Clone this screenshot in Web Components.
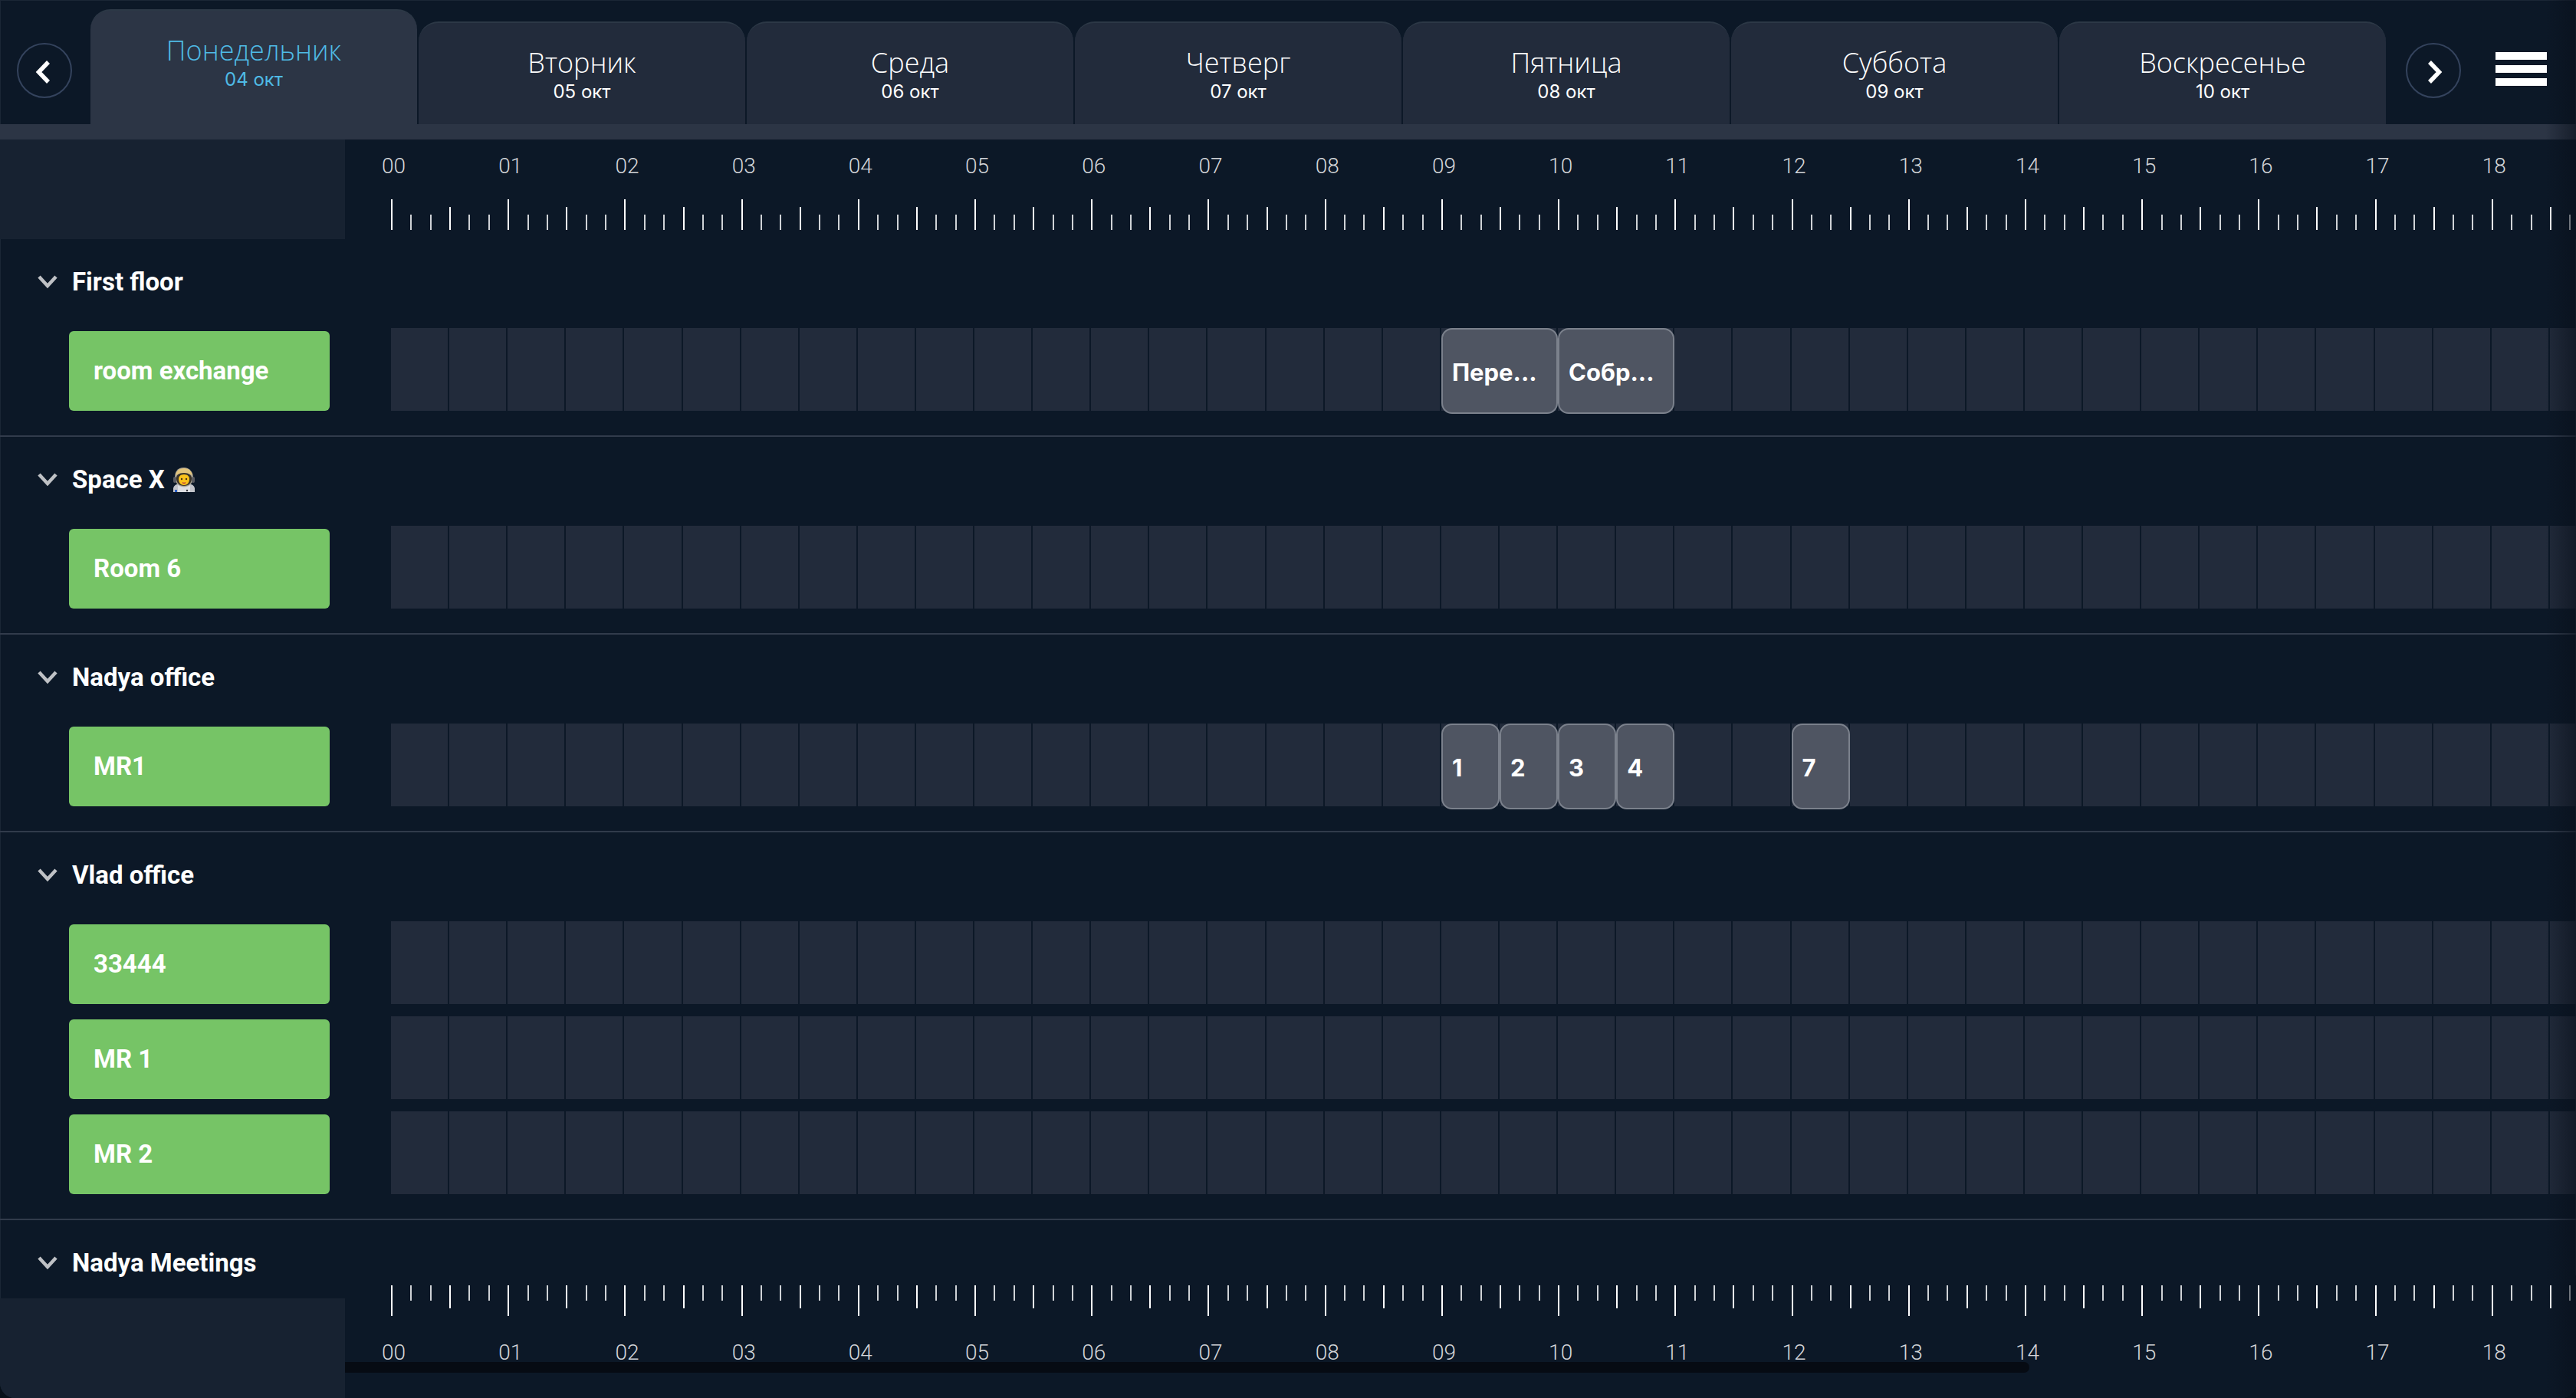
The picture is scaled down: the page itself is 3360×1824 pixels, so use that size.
<!DOCTYPE html>
<html lang="ru">
<head>
<meta charset="UTF-8">
<meta name="viewport" content="width=device-width, initial-scale=1">
<title>Meeting rooms</title>
<style>
    :root {
        --bg: #0c1827;
        --panel: #172231;
        --cell: #222b3b;
        --bar: #2c3545;
        --line: #313b4b;
        --green: #76c466;
        --accent: #4fbbe6;
        --text: #ffffff;
        --muted: #d3d5d9;
        --side-width: 450px;
        --track-offset: 60px;
        --track-width: 2892px;
    }

    body {
        margin: 0;
        background: #071019;
        color: var(--text);
        font-family: Roboto, "Noto Sans", sans-serif;
    }
</style>
</head>
<body>
<schedule-app></schedule-app>

<script>
// Hours drawn on the scale and on every track
const HOURS = Array.from({ length: 19 }, (_, i) => String(i).padStart(2, '0'));

// Round arrow button, direction="prev" or "next"
class NavButton extends HTMLElement {
    constructor() {
        super();
        this.attachShadow({ mode: 'open' });
    }

    connectedCallback() {
        const next = this.getAttribute('direction') === 'next';
        this.shadowRoot.innerHTML = `
            <style>
                :host {
                    display: block;
                }

                button {
                    display: flex;
                    align-items: center;
                    justify-content: center;
                    box-sizing: border-box;
                    width: 72px;
                    height: 72px;
                    padding: 0;
                    border: 2px solid #34435d;
                    border-radius: 50%;
                    background: none;
                    color: inherit;
                    cursor: pointer;
                }
            </style>
            <button type="button" aria-label="${next ? 'Next week' : 'Previous week'}">
                <svg width="40" height="40" viewBox="0 0 40 40" fill="none" stroke="currentColor" stroke-width="5.5">
                    <path d="${next ? 'M15 9 L27.5 22 L15 35' : 'M25 9 L12.5 22 L25 35'}"></path>
                </svg>
            </button>
        `;
    }
}

// One day of the week
class DayTab extends HTMLElement {
    constructor() {
        super();
        this.attachShadow({ mode: 'open' });
    }

    connectedCallback() {
        this.shadowRoot.innerHTML = `
            <style>
                :host {
                    display: flex;
                    flex: 1;
                    min-width: 0;
                    margin-top: 16px;
                }

                :host([active]) {
                    margin-top: 0;
                    color: var(--accent);
                }

                button {
                    flex: 1;
                    display: flex;
                    flex-direction: column;
                    align-items: center;
                    padding: 30px 0 0;
                    border: 0;
                    border-top: 2px solid #2c3846;
                    border-radius: 26px 26px 0 0;
                    background: var(--cell);
                    color: inherit;
                    cursor: pointer;
                }

                :host([active]) button {
                    background: var(--bar);
                }

                .name {
                    font-family: "Open Sans", sans-serif;
                    font-size: 36px;
                    line-height: 44px;
                    font-weight: 300;
                }

                .date {
                    font-family: Inter, sans-serif;
                    font-size: 24px;
                    line-height: 32px;
                    font-weight: 400;
                }
            </style>
            <button type="button" role="tab" aria-selected="${this.hasAttribute('active')}">
                <span class="name"><slot></slot></span>
                <span class="date">${this.getAttribute('date')}</span>
            </button>
        `;
    }
}

class WeekHeader extends HTMLElement {
    constructor() {
        super();
        this.attachShadow({ mode: 'open' });
        this.days = [
            { name: 'Понедельник', date: '04 окт', active: true },
            { name: 'Вторник', date: '05 окт' },
            { name: 'Среда', date: '06 окт' },
            { name: 'Четверг', date: '07 окт' },
            { name: 'Пятница', date: '08 окт' },
            { name: 'Суббота', date: '09 окт' },
            { name: 'Воскресенье', date: '10 окт' }
        ];
        this.render();
    }

    render() {
        this.shadowRoot.innerHTML = `
            <style>
                :host {
                    display: flex;
                    box-sizing: border-box;
                    height: 182px;
                    padding: 12px 38px 0 22px;
                    border-bottom: 20px solid var(--bar);
                }

                nav-button {
                    align-self: flex-start;
                    margin-top: 44px;
                }

                .tabs {
                    flex: 1;
                    display: flex;
                    gap: 2px;
                    margin: 0 26px 0 24px;
                }

                .menu {
                    align-self: flex-start;
                    display: flex;
                    flex-direction: column;
                    gap: 7px;
                    margin: 56px 0 0 45px;
                    padding: 0;
                    border: 0;
                    background: none;
                    cursor: pointer;
                }

                .menu span {
                    width: 67px;
                    height: 10px;
                    background: #ffffff;
                }
            </style>
            <nav-button direction="prev"></nav-button>
            <div class="tabs" role="tablist">
                ${this.days.map(day => `
                    <day-tab date="${day.date}" ${day.active ? 'active' : ''}>${day.name}</day-tab>
                `).join('')}
            </div>
            <nav-button direction="next"></nav-button>
            <button class="menu" type="button" aria-label="Menu">
                <span></span><span></span><span></span>
            </button>
        `;
    }
}

// Hour scale. position="bottom" puts the ticks above the labels
class TimeRuler extends HTMLElement {
    constructor() {
        super();
        this.attachShadow({ mode: 'open' });
    }

    connectedCallback() {
        this.shadowRoot.innerHTML = `
            <style>
                :host {
                    display: flex;
                    flex: none;
                }

                .corner {
                    flex: none;
                    width: var(--side-width);
                    height: 130px;
                    background: var(--panel);
                }

                .scale {
                    position: relative;
                    flex: 1;
                    min-width: 0;
                    box-sizing: border-box;
                    height: 130px;
                    padding-left: var(--track-offset);
                    background: var(--bg);
                    overflow: hidden;
                }

                .hours {
                    display: grid;
                    grid-template-columns: repeat(${HOURS.length}, 1fr);
                    width: var(--track-width);
                    padding-top: 15px;
                }

                .hour {
                    display: flex;
                    flex-direction: column;
                    gap: 23px;
                }

                .label {
                    margin-left: -12px;
                    color: var(--muted);
                    font-size: 28px;
                    line-height: 40px;
                    font-weight: 300;
                }

                .ticks {
                    display: grid;
                    grid-template-columns: repeat(6, 1fr);
                    align-items: end;
                    height: 40px;
                }

                .ticks i {
                    width: 2px;
                    height: 20px;
                    background: #cfd2d6;
                }

                .ticks i:nth-child(1) {
                    height: 40px;
                    background: #ffffff;
                }

                .ticks i:nth-child(4) {
                    height: 30px;
                    background: #ffffff;
                }

                /* the scale is taller than the corner, so it overlaps the groups */
                :host([position="bottom"]) {
                    align-items: flex-end;
                    margin-top: -30px;
                }

                :host([position="bottom"]) .scale {
                    height: 160px;
                }

                :host([position="bottom"]) .hours {
                    padding-top: 13px;
                }

                :host([position="bottom"]) .hour {
                    flex-direction: column-reverse;
                    gap: 28px;
                }

                :host([position="bottom"]) .ticks {
                    align-items: start;
                }

                .thumb {
                    display: none;
                }

                :host([position="bottom"]) .thumb {
                    display: block;
                    position: absolute;
                    left: 0;
                    bottom: 33px;
                    width: 75.5%;
                    height: 14px;
                    border-radius: 0 7px 7px 0;
                    background: #060b13;
                }
            </style>
            <div class="corner"></div>
            <div class="scale">
                <div class="hours">
                    ${HOURS.map(hour => `
                        <div class="hour">
                            <span class="label">${hour}</span>
                            <div class="ticks"><i></i><i></i><i></i><i></i><i></i><i></i></div>
                        </div>
                    `).join('')}
                </div>
                <div class="thumb"></div>
            </div>
        `;
    }
}

// Booking on a room's track; start and span are counted in half hours
class BookingItem extends HTMLElement {
    constructor() {
        super();
        this.attachShadow({ mode: 'open' });
    }

    connectedCallback() {
        this.style.gridColumn = `${Number(this.getAttribute('start')) + 1} / span ${this.getAttribute('span')}`;
        this.shadowRoot.innerHTML = `
            <style>
                :host {
                    display: flex;
                    grid-row: 1;
                    min-width: 0;
                    z-index: 1;
                }

                button {
                    flex: 1;
                    min-width: 0;
                    padding: 4px 12px 0;
                    border: 2px solid #7b818c;
                    border-radius: 14px;
                    background: #4f5562;
                    color: inherit;
                    font-family: Inter, sans-serif;
                    font-size: 31px;
                    line-height: 40px;
                    font-weight: 700;
                    text-align: left;
                    white-space: nowrap;
                    overflow: hidden;
                    cursor: pointer;
                }
            </style>
            <button type="button"><slot></slot></button>
        `;
    }
}

class RoomRow extends HTMLElement {
    constructor() {
        super();
        this.attachShadow({ mode: 'open' });
    }

    connectedCallback() {
        this.shadowRoot.innerHTML = `
            <style>
                :host {
                    display: flex;
                    height: 112px;
                }

                .side {
                    flex: none;
                    box-sizing: border-box;
                    width: var(--side-width);
                    padding: 4px 20px 4px 90px;
                }

                .room {
                    display: block;
                    width: 100%;
                    height: 104px;
                    padding: 0 32px;
                    border: 0;
                    border-radius: 6px;
                    background: var(--green);
                    color: inherit;
                    font-family: inherit;
                    font-size: 33px;
                    line-height: 40px;
                    font-weight: 700;
                    text-align: left;
                    cursor: pointer;
                }

                .scroll {
                    flex: 1;
                    min-width: 0;
                    padding-left: var(--track-offset);
                    overflow: hidden;
                }

                .track {
                    display: grid;
                    grid-template-columns: repeat(${HOURS.length * 2}, 1fr);
                    grid-template-rows: 112px;
                    width: var(--track-width);
                }

                .cell {
                    grid-row: 1;
                    height: 108px;
                    margin-right: 2px;
                    background: var(--cell);
                }
            </style>
            <div class="side"><button class="room" type="button">${this.getAttribute('name')}</button></div>
            <div class="scroll">
                <div class="track">
                    ${HOURS.map((_, i) => `
                        <div class="cell" style="grid-column: ${i * 2 + 1}"></div>
                        <div class="cell" style="grid-column: ${i * 2 + 2}"></div>
                    `).join('')}
                    ${JSON.parse(this.getAttribute('bookings') || '[]').map(b => `
                        <booking-item start="${b.start}" span="${b.span}">${b.title}</booking-item>
                    `).join('')}
                </div>
            </div>
        `;
    }
}

class RoomGroup extends HTMLElement {
    constructor() {
        super();
        this.attachShadow({ mode: 'open' });
        this.shadowRoot.innerHTML = `
            <style>
                :host {
                    display: block;
                    padding-bottom: 28px;
                    border-bottom: 2px solid var(--line);
                }

                .title {
                    display: flex;
                    align-items: center;
                    gap: 18px;
                    height: 116px;
                    padding: 0 0 4px 48px;
                    border: 0;
                    background: none;
                    color: inherit;
                    font-family: inherit;
                    font-size: 33px;
                    line-height: 40px;
                    font-weight: 700;
                    cursor: pointer;
                }

                .name {
                    display: flex;
                    align-items: center;
                    gap: 10px;
                }

                .rooms {
                    display: flex;
                    flex-direction: column;
                    gap: 12px;
                }
            </style>
            <button class="title" type="button" aria-expanded="true">
                <svg width="28" height="24" viewBox="0 0 28 24" fill="none" stroke="#bfc1c5" stroke-width="4.5">
                    <path d="M3 5 L14 17 L25 5"></path>
                </svg>
                <span class="name"><slot name="title"></slot></span>
            </button>
            <div class="rooms"><slot></slot></div>
        `;
    }
}

class AstronautIcon extends HTMLElement {
    constructor() {
        super();
        this.attachShadow({ mode: 'open' });
        this.shadowRoot.innerHTML = `
            <style>
                :host {
                    display: inline-flex;
                }
            </style>
            <svg width="30" height="32" viewBox="0 0 30 32" role="img" aria-label="Astronaut">
                <path d="M1 32 V27 Q2 22 9 21 H21 Q28 22 29 27 V32 Z" fill="#c3c4ca"></path>
                <path d="M7 23 Q15 29 23 23 V32 H7 Z" fill="#dedfe3"></path>
                <path d="M15 0 C6 0 3 6 3 13 C3 20 8 25 15 25 C22 25 27 20 27 13 C27 6 22 0 15 0 Z" fill="#a7a294"></path>
                <path d="M15 1 C8 1 5 5 4 10 Q15 4 26 10 C25 5 22 1 15 1 Z" fill="#e3c57c"></path>
                <rect x="1" y="12" width="4" height="8" rx="2" fill="#595a60"></rect>
                <rect x="25" y="12" width="4" height="8" rx="2" fill="#595a60"></rect>
                <path d="M15 7 C8 7 5 10 5 14 C5 20 9 24 15 24 C21 24 25 20 25 14 C25 10 21 7 15 7 Z" fill="#3b3429"></path>
                <path d="M15 9 C10 9 8 12 8 15 C8 20 11 23 15 23 C19 23 22 20 22 15 C22 12 20 9 15 9 Z" fill="#fbc21c"></path>
                <circle cx="12" cy="15" r="1.2" fill="#4b3418"></circle>
                <circle cx="18" cy="15" r="1.2" fill="#4b3418"></circle>
                <path d="M13 19.5 Q15 21.5 17 19.5" stroke="#c0453a" stroke-width="1.2" fill="none"></path>
                <rect x="3" y="29" width="3" height="3" fill="#2d62c8"></rect>
                <circle cx="19" cy="30" r="1.2" fill="#33343a"></circle>
            </svg>
        `;
    }
}

class ScheduleApp extends HTMLElement {
    constructor() {
        super();
        this.attachShadow({ mode: 'open' });
        this.groups = [
            {
                name: 'First floor',
                rooms: [{
                    name: 'room exchange',
                    bookings: [
                        { title: 'Пере...', start: 18, span: 2 },
                        { title: 'Собр...', start: 20, span: 2 }
                    ]
                }]
            },
            { name: 'Space X', icon: '<astronaut-icon></astronaut-icon>', rooms: [{ name: 'Room 6' }] },
            {
                name: 'Nadya office',
                rooms: [{
                    name: 'MR1',
                    bookings: [
                        { title: '1', start: 18, span: 1 },
                        { title: '2', start: 19, span: 1 },
                        { title: '3', start: 20, span: 1 },
                        { title: '4', start: 21, span: 1 },
                        { title: '7', start: 24, span: 1 }
                    ]
                }]
            },
            { name: 'Vlad office', rooms: [{ name: '33444' }, { name: 'MR 1' }, { name: 'MR 2' }] },
            { name: 'Nadya Meetings', rooms: [] }
        ];
        this.render();
    }

    render() {
        this.shadowRoot.innerHTML = `
            <style>
                :host {
                    position: relative;
                    display: flex;
                    flex-direction: column;
                    box-sizing: border-box;
                    height: 100vh;
                    overflow: hidden;
                    border-radius: 0 0 20px 20px;
                    background: var(--bg);
                    box-shadow: inset 0 0 0 1px #1b2635;
                }

                .groups {
                    flex: 1;
                    min-height: 0;
                    overflow: hidden;
                }

                .edge {
                    position: absolute;
                    top: 0;
                    right: 0;
                    bottom: 0;
                    width: 40px;
                    background: linear-gradient(to right, rgba(8, 15, 26, 0), rgba(8, 15, 26, 0.6));
                    pointer-events: none;
                }
            </style>
            <week-header></week-header>
            <time-ruler></time-ruler>
            <div class="groups">
                ${this.groups.map(group => `
                    <room-group>
                        <span slot="title">${group.name}</span>
                        ${group.icon ? `<span slot="title" style="display: flex">${group.icon}</span>` : ''}
                        ${group.rooms.map(room => `
                            <room-row name="${room.name}" bookings='${JSON.stringify(room.bookings || [])}'></room-row>
                        `).join('')}
                    </room-group>
                `).join('')}
            </div>
            <time-ruler position="bottom"></time-ruler>
            <div class="edge"></div>
        `;
    }
}

customElements.define('nav-button', NavButton);
customElements.define('day-tab', DayTab);
customElements.define('week-header', WeekHeader);
customElements.define('time-ruler', TimeRuler);
customElements.define('booking-item', BookingItem);
customElements.define('room-row', RoomRow);
customElements.define('room-group', RoomGroup);
customElements.define('astronaut-icon', AstronautIcon);
customElements.define('schedule-app', ScheduleApp);
</script>
</body>
</html>
